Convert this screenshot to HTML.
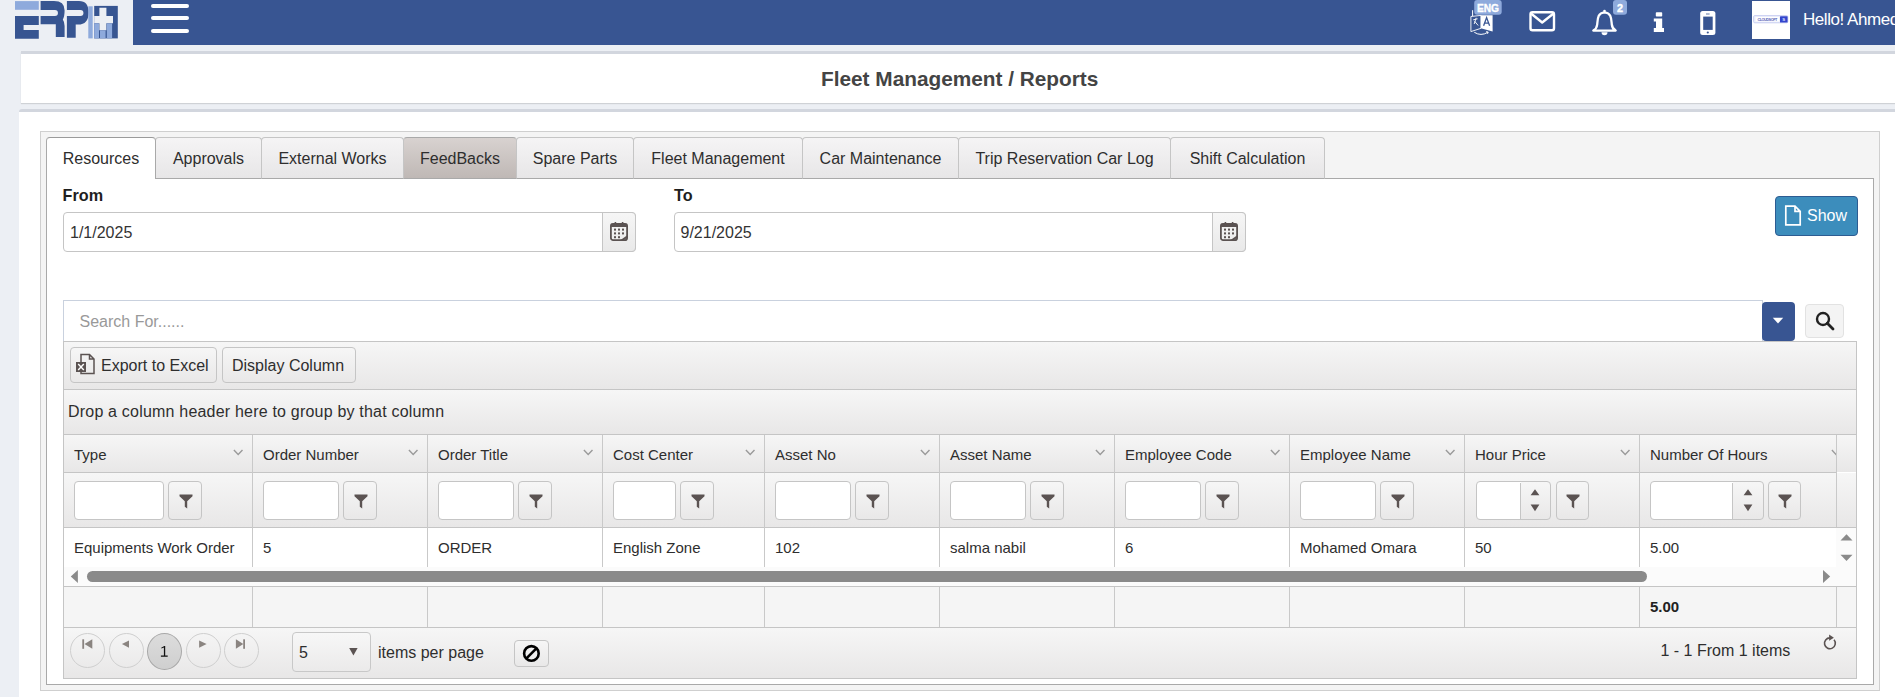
<!DOCTYPE html>
<html><head><meta charset="utf-8">
<style>
*{box-sizing:border-box;margin:0;padding:0}
html,body{width:1895px;height:697px;overflow:hidden}
body{background:#eceff4;font-family:"Liberation Sans",sans-serif;color:#2e2e2e;position:relative;font-size:16px}
.a{position:absolute}
svg{display:block}
.t{position:absolute;white-space:nowrap;line-height:20px}
#hdr{left:133px;top:0;width:1762px;height:45px;background:#385592}
.card1{left:21px;top:51px;width:1874px;height:52px;background:#fff;border-top:3px solid #d2d6de;box-shadow:0 1px 1px rgba(0,0,0,.12)}
.card2{left:19px;top:109px;width:1876px;height:600px;background:#fff;border-top:3px solid #d2d6de;border-radius:3px 0 0 0}
.outer{left:40px;top:131px;width:1840px;height:560px;background:#f4f4f4;border:1px solid #cfcfcf}
.inner{left:46px;top:178px;width:1828px;height:507px;background:#fff;border:1px solid #a9a9a9}
.tab{position:absolute;top:137px;height:42px;border:1px solid #c5c5c5;border-bottom:1px solid #a9a9a9;border-radius:4px 4px 0 0;background:linear-gradient(#f5f4f5,#e7e6e7);color:#2e2e2e}
.tab span{position:absolute;left:0;right:0;top:11px;text-align:center;line-height:20px;white-space:nowrap}
.tab.act{background:#fff;border-color:#a9a9a9;border-top-color:#9a9a9a;border-bottom:none;height:42px;z-index:2}
.tab.hov{background:linear-gradient(#d8d2d0,#bfb8b5);border-top-color:#a9a9a9}
.lbl{position:absolute;font-weight:bold;font-size:16.2px;color:#1e1e1e;line-height:20px}
.inp{position:absolute;height:40px;border:1px solid #c5c5c5;border-radius:4px;background:#fff}
.calb{position:absolute;height:40px;width:34px;border:1px solid #c5c5c5;border-radius:0 4px 4px 0;background:linear-gradient(#f6f6f6,#e9e9e9)}
.grad{background:linear-gradient(#f6f6f6,#e8e7e7)}
.btn{position:absolute;border:1px solid #c5c5c5;border-radius:4px;background:linear-gradient(#f6f6f6,#e9e8e8)}
.vl{position:absolute;width:1px;background:#c9c9c9}
.hl{position:absolute;height:1px;background:#c5c5c5}
</style></head><body>
<!-- header -->
<div class="a" id="hdr"></div>
<!-- logo -->
<svg class="a" style="left:0;top:0" width="133" height="45" viewBox="0 0 133 45">
 <rect x="15" y="1.1" width="23.8" height="8.7" fill="#8eaadc"/>
 <path d="M15 15.9H38.8V25H23.6V30H38.8V38.8H15Z" fill="#375591"/>
 <path d="M40.6 1.1H54Q64.6 1.1 64.6 10.5Q64.6 16.5 62.8 19.5Q64.6 22 64.6 26V37H55.8V24.2H40.6V15.9H55A2.8 2.8 0 0 0 55 10H40.6Z" fill="#375591"/>
 <path d="M66.9 1.1H79Q88.6 1.1 88.6 12.5Q88.6 24.6 78 24.6H75.7V37.7H66.9V15.9H80.5A2.9 2.9 0 0 0 80.5 10H66.9Z" fill="#375591"/>
 <rect x="88.3" y="6.3" width="4.4" height="32.1" fill="#8eaadc"/>
 <rect x="94.2" y="5.9" width="23.6" height="32.5" fill="#375591"/>
 <path d="M99.4 7.8H106.4V15.9H113V23.3H106.4V30.3H99.4V23.3H94.2V15.9H99.4Z" fill="#eceff4"/>
 <rect x="94.2" y="23.3" width="4.8" height="15.1" fill="#8eaadc"/>
 <rect x="100" y="30.3" width="5.6" height="8.1" fill="#8eaadc"/>
 <rect x="106.8" y="23.3" width="5.3" height="15.1" fill="#8eaadc"/>
</svg>
<svg class="a" style="left:151px;top:4px" width="38" height="30" viewBox="0 0 38 30">
 <rect x="0" y="0" width="38" height="4" rx="2" fill="#fff"/>
 <rect x="0" y="12" width="38" height="4" rx="2" fill="#fff"/>
 <rect x="0" y="25" width="38" height="4" rx="2" fill="#fff"/>
</svg>



<!-- header icons -->
<svg class="a" style="left:1460px;top:0" width="435" height="45" viewBox="1460 0 435 45">
 <!-- language -->
 <path d="M1472.6 10.2V16" stroke="#fff" stroke-width="1" fill="none"/>
 <path d="M1470.9 16.5L1481 15.4V28.3L1470.9 31.6Z" fill="none" stroke="#fff" stroke-width="0.9"/>
 <path d="M1480.8 15.2H1492.6V31.6L1480.8 28.2Z" fill="#fff"/>
 <path d="M1483.6 25.8L1486.6 17.6L1489.6 25.8M1484.6 23.2H1488.6" stroke="#385592" stroke-width="1.3" fill="none"/>
 <path d="M1473.2 19.8L1477.6 18.8M1476.2 17.8L1474.2 24M1474.6 21.2L1478.2 25.5" stroke="#fff" stroke-width="0.9" fill="none"/>
 <path d="M1474.3 32.3Q1481 36.5 1487.8 32.3M1486.2 31.6L1488.2 32.1L1487.5 33.8" stroke="#fff" stroke-width="1" fill="none"/>
 <rect x="1474.2" y="0" width="27.5" height="14.7" rx="3" fill="#8eaadc"/>
 <text x="1488" y="11.8" font-family="Liberation Sans" font-weight="bold" font-size="10.2" fill="#fff" stroke="#fff" stroke-width="0.35" text-anchor="middle">ENG</text>
 <!-- envelope -->
 <rect x="1530.5" y="12.2" width="23.5" height="18" rx="2" fill="none" stroke="#fff" stroke-width="2.4"/>
 <path d="M1531 13.5L1542.2 22.5L1553.5 13.5" fill="none" stroke="#fff" stroke-width="2.4" stroke-linejoin="round"/>
 <!-- bell -->
 <path d="M1604.5 12.3C1597.5 12.8 1597.8 19 1597.2 24.5C1596.8 28 1594.5 30 1593.3 30.6H1615.7C1614.5 30 1612.2 28 1611.8 24.5C1611.2 19 1611.5 12.8 1604.5 12.3Z" fill="none" stroke="#fff" stroke-width="2.3" stroke-linejoin="round"/>
 <circle cx="1604.5" cy="11" r="1.3" fill="#fff"/>
 <path d="M1601.5 32.2A3 3 0 0 0 1607.5 32.2Z" fill="#fff"/>
 <rect x="1613" y="0" width="14" height="14.8" rx="3" fill="#8eaadc"/>
 <text x="1620" y="12" font-family="Liberation Sans" font-weight="bold" font-size="10.8" fill="#fff" stroke="#fff" stroke-width="0.4" text-anchor="middle">2</text>
 <!-- info -->
 <rect x="1655.8" y="12.2" width="6.4" height="4.4" rx="0.8" fill="#fff"/>
 <path d="M1653.8 18.5H1662.2V28H1664V32H1653.8V28H1656V21.5H1653.8Z" fill="#fff"/>
 <!-- phone -->
 <rect x="1700.2" y="11.1" width="15.2" height="24" rx="2.5" fill="#fff"/>
 <rect x="1703.2" y="16.6" width="9.5" height="13.3" fill="#385592"/>
 <circle cx="1707.8" cy="32.5" r="1.1" fill="#385592"/>
 <rect x="1706" y="13.6" width="3.6" height="0.8" fill="#385592"/>
 <!-- avatar -->
 <rect x="1752" y="1" width="38" height="38" fill="#fff"/>
 <rect x="1753.6" y="15.6" width="34.2" height="7.2" rx="1.2" fill="#eef0fb" stroke="#c4c9f0" stroke-width="0.9"/>
 <rect x="1755.6" y="17" width="23.6" height="4.4" fill="#fff"/>
 <rect x="1780" y="16.2" width="7.6" height="6.4" rx="0.6" fill="#3344cc"/>
 <text x="1767.4" y="20.6" font-family="Liberation Sans" font-weight="bold" font-size="3.8" fill="#5a63b8" text-anchor="middle" textLength="20">CLOUDSOFT</text>
 <text x="1783.8" y="21" font-family="Liberation Sans" font-weight="bold" font-size="4.4" fill="#dfe3ff" text-anchor="middle">S</text>
</svg>
<div class="t" style="left:1803px;top:10px;font-size:17px;letter-spacing:-0.45px;color:#fff;line-height:20px">Hello! Ahmed</div>
<div class="a card1"></div>
<div class="t" style="left:821px;top:67.0px;font-weight:bold;font-size:20.8px;color:#444;line-height:24px">Fleet Management / Reports</div>

<div class="a card2"></div>
<div class="a outer"></div>
<div class="a inner"></div>

<!-- tabs -->
<div class="tab act" style="left:46px;width:110px"><span>Resources</span></div>
<div class="tab" style="left:155px;width:107px"><span>Approvals</span></div>
<div class="tab" style="left:261px;width:143px"><span>External Works</span></div>
<div class="tab hov" style="left:403px;width:114px"><span>FeedBacks</span></div>
<div class="tab" style="left:516px;width:118px"><span>Spare Parts</span></div>
<div class="tab" style="left:633px;width:170px"><span>Fleet Management</span></div>
<div class="tab" style="left:802px;width:157px"><span>Car Maintenance</span></div>
<div class="tab" style="left:958px;width:213px"><span>Trip Reservation Car Log</span></div>
<div class="tab" style="left:1170px;width:155px"><span>Shift Calculation</span></div>


<!-- form -->
<div class="lbl" style="left:62.6px;top:185px">From</div>
<div class="inp" style="left:63px;top:212px;width:573px"></div>
<div class="calb" style="left:602px;top:212px"><div class="a" style="left:7px;top:9px"><svg width="18" height="19" viewBox="0 0 18 19"><rect x="0.9" y="1.8" width="16.2" height="16.3" rx="2.2" fill="none" stroke="#5b5352" stroke-width="1.8"/><rect x="0.9" y="1.8" width="16.2" height="3.2" fill="#5b5352"/><rect x="4.6" y="0" width="1.6" height="3" fill="#5b5352"/><rect x="11.8" y="0" width="1.6" height="3" fill="#5b5352"/><g fill="#5b5352"><rect x="4" y="6.6" width="2" height="2"/><rect x="8" y="6.6" width="2" height="2"/><rect x="12" y="6.6" width="2" height="2"/><rect x="4" y="10.4" width="2" height="2"/><rect x="8" y="10.4" width="2" height="2"/><rect x="12" y="10.4" width="2" height="2"/><rect x="4" y="14.2" width="2" height="2"/><rect x="8" y="14.2" width="2" height="2"/><path d="M10.5 18L17 13.5V16L14 18Z"/></g></svg></div></div>
<div class="t" style="left:70px;top:223.3px;color:#333">1/1/2025</div>
<div class="lbl" style="left:674px;top:185px">To</div>
<div class="inp" style="left:674px;top:212px;width:572px"></div>
<div class="calb" style="left:1212px;top:212px"><div class="a" style="left:7px;top:9px"><svg width="18" height="19" viewBox="0 0 18 19"><rect x="0.9" y="1.8" width="16.2" height="16.3" rx="2.2" fill="none" stroke="#5b5352" stroke-width="1.8"/><rect x="0.9" y="1.8" width="16.2" height="3.2" fill="#5b5352"/><rect x="4.6" y="0" width="1.6" height="3" fill="#5b5352"/><rect x="11.8" y="0" width="1.6" height="3" fill="#5b5352"/><g fill="#5b5352"><rect x="4" y="6.6" width="2" height="2"/><rect x="8" y="6.6" width="2" height="2"/><rect x="12" y="6.6" width="2" height="2"/><rect x="4" y="10.4" width="2" height="2"/><rect x="8" y="10.4" width="2" height="2"/><rect x="12" y="10.4" width="2" height="2"/><rect x="4" y="14.2" width="2" height="2"/><rect x="8" y="14.2" width="2" height="2"/><path d="M10.5 18L17 13.5V16L14 18Z"/></g></svg></div></div>
<div class="t" style="left:680.5px;top:223.3px;color:#333">9/21/2025</div>
<div class="a" style="left:1775px;top:195.5px;width:82.5px;height:40.5px;background:#3c8dbc;border:1px solid #2d5c92;border-radius:4px"></div>
<svg class="a" style="left:1784px;top:205px" width="18" height="21" viewBox="0 0 18 21"><path d="M1.8 1.2H11L16.2 6.4V19.8H1.8Z M11 1.2V6.4H16.2" fill="none" stroke="#fff" stroke-width="1.7" stroke-linejoin="miter"/></svg>
<div class="t" style="left:1807px;top:206px;color:#fff">Show</div>

<!-- search -->
<div class="a" style="left:63px;top:300px;width:1700px;height:42px;border:1px solid #c9d1de;background:#fff"></div>
<div class="t" style="left:79.5px;top:312.0px;color:#999">Search For......</div>
<div class="a" style="left:1762px;top:301.5px;width:32.5px;height:39px;background:#385592;border-radius:4px"></div>
<svg class="a" style="left:1772px;top:317px" width="12" height="7" viewBox="0 0 12 7"><path d="M0.8 0.8H11.2L6 6.4Z" fill="#fff"/></svg>
<div class="a" style="left:1805px;top:304px;width:38.5px;height:33.5px;background:#f4f4f4;border:1px solid #e2e2e2;border-radius:4px"></div>
<svg class="a" style="left:1815px;top:311px" width="20" height="20" viewBox="0 0 20 20"><circle cx="8" cy="8" r="6" fill="none" stroke="#222" stroke-width="2.4"/><path d="M12.3 12.3L18 18" stroke="#222" stroke-width="2.8" stroke-linecap="round"/></svg>

<!-- grid -->
<div class="a" style="left:63px;top:341px;width:1794px;height:338px;border:1px solid #c5c5c5;background:#fff"></div>
<div class="a grad" style="left:64px;top:342px;width:1792px;height:47px"></div>
<div class="hl" style="left:64px;top:389px;width:1792px"></div>
<div class="btn" style="left:70px;top:347px;width:146.5px;height:36px"></div>
<svg class="a" style="left:75px;top:353px" width="21" height="22" viewBox="0 0 21 22"><path d="M6 1.5H14.5L19 6V20.5H6Z M14.5 1.5V6H19" fill="none" stroke="#5b5352" stroke-width="1.5"/><rect x="1" y="9" width="10" height="10" fill="#5b5352"/><path d="M3.2 11L8.8 17M8.8 11L3.2 17" stroke="#fff" stroke-width="1.4"/></svg>
<div class="t" style="left:101px;top:355.8px">Export to Excel</div>
<div class="btn" style="left:222px;top:347px;width:133.5px;height:36px"></div>
<div class="t" style="left:232px;top:355.8px">Display Column</div>
<div class="a grad" style="left:64px;top:390px;width:1792px;height:44px"></div>
<div class="hl" style="left:64px;top:434px;width:1792px"></div>
<div class="t" style="left:68px;top:402px;letter-spacing:0.2px">Drop a column header here to group by that column</div>
<div class="a grad" style="left:64px;top:435px;width:1792px;height:37px"></div>
<div class="hl" style="left:64px;top:472px;width:1772px"></div>
<div class="a grad" style="left:64px;top:473px;width:1792px;height:54px"></div>
<div class="hl" style="left:64px;top:527px;width:1792px"></div>
<div class="a" style="left:64px;top:528px;width:1772px;height:39px;background:#fff"></div>
<div class="a" style="left:64px;top:567px;width:1772px;height:19px;background:#fbfbfb"></div>
<div class="a" style="left:1836px;top:528px;width:20px;height:58px;background:#fbfbfb"></div>
<div class="a" style="left:87px;top:570.5px;width:1560px;height:11.5px;border-radius:6px;background:#8a8a8a"></div>
<svg class="a" style="left:68px;top:567px" width="1770" height="19" viewBox="68 567 1770 19"><path d="M70.8 576.4L77.9 569.9V583Z" fill="#8a8a8a"/><path d="M1830.2 576.5L1823 570V583Z" fill="#8a8a8a"/></svg>
<svg class="a" style="left:1838px;top:530px" width="18" height="34" viewBox="1838 530 18 34"><path d="M1840.5 540.5H1852.5L1846.5 534.3Z" fill="#8a8a8a"/><path d="M1840.5 554.8H1852.5L1846.5 561Z" fill="#8a8a8a"/></svg>
<div class="hl" style="left:64px;top:586px;width:1792px"></div>
<div class="a" style="left:64px;top:587px;width:1792px;height:40px;background:#f5f5f5"></div>
<div class="hl" style="left:64px;top:626.5px;width:1792px;background:#c5c5c5"></div>
<div class="t" style="left:1650px;top:597px;font-weight:bold;font-size:15px;color:#222">5.00</div>
<div class="a grad" style="left:64px;top:627.5px;width:1792px;height:50.5px"></div>
<div class="t" style="left:74px;top:444.6px;font-size:15px">Type</div>
<div class="a" style="left:232.5px;top:449px"><svg width="10" height="7" viewBox="0 0 10 7"><path d="M0.9 1.1L5.2 5.6L9.5 1.1" fill="none" stroke="#9a9a9a" stroke-width="1.4"/></svg></div>
<div class="t" style="left:74px;top:537.8px;font-size:15px">Equipments Work Order</div>
<div class="inp" style="left:74px;top:481.2px;width:90px;height:38.5px"></div>
<div class="btn" style="left:168px;top:481.2px;width:33.5px;height:38.5px"><div class="a" style="left:9.5px;top:11.5px"><svg width="14" height="15" viewBox="0 0 14 15"><path d="M0.5 0.5H13.5V2.2L8.2 7.2V14.5L5.8 12.8V7.2L0.5 2.2Z" fill="#5b5352"/></svg></div></div>
<div class="vl" style="left:252px;top:435px;height:132px"></div>
<div class="vl" style="left:252px;top:587px;height:40px"></div>
<div class="t" style="left:263px;top:444.6px;font-size:15px">Order Number</div>
<div class="a" style="left:407.5px;top:449px"><svg width="10" height="7" viewBox="0 0 10 7"><path d="M0.9 1.1L5.2 5.6L9.5 1.1" fill="none" stroke="#9a9a9a" stroke-width="1.4"/></svg></div>
<div class="t" style="left:263px;top:537.8px;font-size:15px">5</div>
<div class="inp" style="left:263px;top:481.2px;width:76px;height:38.5px"></div>
<div class="btn" style="left:343px;top:481.2px;width:33.5px;height:38.5px"><div class="a" style="left:9.5px;top:11.5px"><svg width="14" height="15" viewBox="0 0 14 15"><path d="M0.5 0.5H13.5V2.2L8.2 7.2V14.5L5.8 12.8V7.2L0.5 2.2Z" fill="#5b5352"/></svg></div></div>
<div class="vl" style="left:427px;top:435px;height:132px"></div>
<div class="vl" style="left:427px;top:587px;height:40px"></div>
<div class="t" style="left:438px;top:444.6px;font-size:15px">Order Title</div>
<div class="a" style="left:582.5px;top:449px"><svg width="10" height="7" viewBox="0 0 10 7"><path d="M0.9 1.1L5.2 5.6L9.5 1.1" fill="none" stroke="#9a9a9a" stroke-width="1.4"/></svg></div>
<div class="t" style="left:438px;top:537.8px;font-size:15px">ORDER</div>
<div class="inp" style="left:438px;top:481.2px;width:76px;height:38.5px"></div>
<div class="btn" style="left:518px;top:481.2px;width:33.5px;height:38.5px"><div class="a" style="left:9.5px;top:11.5px"><svg width="14" height="15" viewBox="0 0 14 15"><path d="M0.5 0.5H13.5V2.2L8.2 7.2V14.5L5.8 12.8V7.2L0.5 2.2Z" fill="#5b5352"/></svg></div></div>
<div class="vl" style="left:602px;top:435px;height:132px"></div>
<div class="vl" style="left:602px;top:587px;height:40px"></div>
<div class="t" style="left:613px;top:444.6px;font-size:15px">Cost Center</div>
<div class="a" style="left:744.5px;top:449px"><svg width="10" height="7" viewBox="0 0 10 7"><path d="M0.9 1.1L5.2 5.6L9.5 1.1" fill="none" stroke="#9a9a9a" stroke-width="1.4"/></svg></div>
<div class="t" style="left:613px;top:537.8px;font-size:15px">English Zone</div>
<div class="inp" style="left:613px;top:481.2px;width:63px;height:38.5px"></div>
<div class="btn" style="left:680px;top:481.2px;width:33.5px;height:38.5px"><div class="a" style="left:9.5px;top:11.5px"><svg width="14" height="15" viewBox="0 0 14 15"><path d="M0.5 0.5H13.5V2.2L8.2 7.2V14.5L5.8 12.8V7.2L0.5 2.2Z" fill="#5b5352"/></svg></div></div>
<div class="vl" style="left:764px;top:435px;height:132px"></div>
<div class="vl" style="left:764px;top:587px;height:40px"></div>
<div class="t" style="left:775px;top:444.6px;font-size:15px">Asset No</div>
<div class="a" style="left:919.5px;top:449px"><svg width="10" height="7" viewBox="0 0 10 7"><path d="M0.9 1.1L5.2 5.6L9.5 1.1" fill="none" stroke="#9a9a9a" stroke-width="1.4"/></svg></div>
<div class="t" style="left:775px;top:537.8px;font-size:15px">102</div>
<div class="inp" style="left:775px;top:481.2px;width:76px;height:38.5px"></div>
<div class="btn" style="left:855px;top:481.2px;width:33.5px;height:38.5px"><div class="a" style="left:9.5px;top:11.5px"><svg width="14" height="15" viewBox="0 0 14 15"><path d="M0.5 0.5H13.5V2.2L8.2 7.2V14.5L5.8 12.8V7.2L0.5 2.2Z" fill="#5b5352"/></svg></div></div>
<div class="vl" style="left:939px;top:435px;height:132px"></div>
<div class="vl" style="left:939px;top:587px;height:40px"></div>
<div class="t" style="left:950px;top:444.6px;font-size:15px">Asset Name</div>
<div class="a" style="left:1094.5px;top:449px"><svg width="10" height="7" viewBox="0 0 10 7"><path d="M0.9 1.1L5.2 5.6L9.5 1.1" fill="none" stroke="#9a9a9a" stroke-width="1.4"/></svg></div>
<div class="t" style="left:950px;top:537.8px;font-size:15px">salma nabil</div>
<div class="inp" style="left:950px;top:481.2px;width:76px;height:38.5px"></div>
<div class="btn" style="left:1030px;top:481.2px;width:33.5px;height:38.5px"><div class="a" style="left:9.5px;top:11.5px"><svg width="14" height="15" viewBox="0 0 14 15"><path d="M0.5 0.5H13.5V2.2L8.2 7.2V14.5L5.8 12.8V7.2L0.5 2.2Z" fill="#5b5352"/></svg></div></div>
<div class="vl" style="left:1114px;top:435px;height:132px"></div>
<div class="vl" style="left:1114px;top:587px;height:40px"></div>
<div class="t" style="left:1125px;top:444.6px;font-size:15px">Employee Code</div>
<div class="a" style="left:1269.5px;top:449px"><svg width="10" height="7" viewBox="0 0 10 7"><path d="M0.9 1.1L5.2 5.6L9.5 1.1" fill="none" stroke="#9a9a9a" stroke-width="1.4"/></svg></div>
<div class="t" style="left:1125px;top:537.8px;font-size:15px">6</div>
<div class="inp" style="left:1125px;top:481.2px;width:76px;height:38.5px"></div>
<div class="btn" style="left:1205px;top:481.2px;width:33.5px;height:38.5px"><div class="a" style="left:9.5px;top:11.5px"><svg width="14" height="15" viewBox="0 0 14 15"><path d="M0.5 0.5H13.5V2.2L8.2 7.2V14.5L5.8 12.8V7.2L0.5 2.2Z" fill="#5b5352"/></svg></div></div>
<div class="vl" style="left:1289px;top:435px;height:132px"></div>
<div class="vl" style="left:1289px;top:587px;height:40px"></div>
<div class="t" style="left:1300px;top:444.6px;font-size:15px">Employee Name</div>
<div class="a" style="left:1444.5px;top:449px"><svg width="10" height="7" viewBox="0 0 10 7"><path d="M0.9 1.1L5.2 5.6L9.5 1.1" fill="none" stroke="#9a9a9a" stroke-width="1.4"/></svg></div>
<div class="t" style="left:1300px;top:537.8px;font-size:15px">Mohamed Omara</div>
<div class="inp" style="left:1300px;top:481.2px;width:76px;height:38.5px"></div>
<div class="btn" style="left:1380px;top:481.2px;width:33.5px;height:38.5px"><div class="a" style="left:9.5px;top:11.5px"><svg width="14" height="15" viewBox="0 0 14 15"><path d="M0.5 0.5H13.5V2.2L8.2 7.2V14.5L5.8 12.8V7.2L0.5 2.2Z" fill="#5b5352"/></svg></div></div>
<div class="vl" style="left:1464px;top:435px;height:132px"></div>
<div class="vl" style="left:1464px;top:587px;height:40px"></div>
<div class="t" style="left:1475px;top:444.6px;font-size:15px">Hour Price</div>
<div class="a" style="left:1619.5px;top:449px"><svg width="10" height="7" viewBox="0 0 10 7"><path d="M0.9 1.1L5.2 5.6L9.5 1.1" fill="none" stroke="#9a9a9a" stroke-width="1.4"/></svg></div>
<div class="t" style="left:1475px;top:537.8px;font-size:15px">50</div>
<div class="vl" style="left:1639px;top:435px;height:132px"></div>
<div class="vl" style="left:1639px;top:587px;height:40px"></div>
<div class="t" style="left:1650px;top:444.6px;font-size:15px">Number Of Hours</div>
<div class="a" style="left:1826px;top:449px;width:10px;overflow:hidden"><div style="margin-left:5px"><svg width="10" height="7" viewBox="0 0 10 7"><path d="M0.9 1.1L5.2 5.6L9.5 1.1" fill="none" stroke="#9a9a9a" stroke-width="1.4"/></svg></div></div>
<div class="t" style="left:1650px;top:537.8px;font-size:15px">5.00</div>
<div class="inp" style="left:1475.5px;top:481.2px;width:75px;height:38.5px;background:linear-gradient(90deg,#fff 44px,transparent 44px),linear-gradient(#f6f6f6,#e9e8e8)"></div>
<div class="vl" style="left:1519.5px;top:482.5px;height:36.5px;background:#c5c5c5"></div>
<div class="a" style="left:1529.0px;top:487.5px"><svg width="12" height="24" viewBox="0 0 12 24"><path d="M1.6 7.2H10.4L6 1.2Z M1.6 16.6H10.4L6 23.2Z" fill="#5b5352"/></svg></div>
<div class="btn" style="left:1555.5px;top:481.2px;width:33.5px;height:38.5px"><div class="a" style="left:9.5px;top:11.5px"><svg width="14" height="15" viewBox="0 0 14 15"><path d="M0.5 0.5H13.5V2.2L8.2 7.2V14.5L5.8 12.8V7.2L0.5 2.2Z" fill="#5b5352"/></svg></div></div>
<div class="inp" style="left:1650px;top:481.2px;width:114px;height:38.5px;background:linear-gradient(90deg,#fff 82px,transparent 82px),linear-gradient(#f6f6f6,#e9e8e8)"></div>
<div class="vl" style="left:1732px;top:482.5px;height:36.5px;background:#c5c5c5"></div>
<div class="a" style="left:1741.5px;top:487.5px"><svg width="12" height="24" viewBox="0 0 12 24"><path d="M1.6 7.2H10.4L6 1.2Z M1.6 16.6H10.4L6 23.2Z" fill="#5b5352"/></svg></div>
<div class="btn" style="left:1767.5px;top:481.2px;width:33.5px;height:38.5px"><div class="a" style="left:9.5px;top:11.5px"><svg width="14" height="15" viewBox="0 0 14 15"><path d="M0.5 0.5H13.5V2.2L8.2 7.2V14.5L5.8 12.8V7.2L0.5 2.2Z" fill="#5b5352"/></svg></div></div>
<div class="vl" style="left:1836px;top:435px;height:92px"></div>
<div class="vl" style="left:1836px;top:587px;height:40px"></div>
<div class="a" style="left:70px;top:633px;width:35px;height:35px;border-radius:50%;border:1px solid #cfcfcf"></div>
<div class="a" style="left:108.5px;top:633px;width:35px;height:35px;border-radius:50%;border:1px solid #cfcfcf"></div>
<div class="a" style="left:147px;top:632.8px;width:35px;height:37px;border-radius:50%;border:1px solid #a8a8a8;background:linear-gradient(#dcdcdc,#cfcfcf)"></div>
<div class="a" style="left:186px;top:633px;width:35px;height:35px;border-radius:50%;border:1px solid #cfcfcf"></div>
<div class="a" style="left:224px;top:633px;width:35px;height:35px;border-radius:50%;border:1px solid #cfcfcf"></div>
<svg class="a" style="left:158px;top:644px" width="12" height="14" viewBox="158 644 12 14"><path d="M161.2 647.7L164.3 645.9H165.2V655.6H167.7V656.7H160.9V655.6H163.9V647.5L161.5 648.6Z" fill="#111"/></svg>
<svg class="a" style="left:70px;top:636px" width="190" height="16" viewBox="70 636 190 16"><g fill="#8a8480"><rect x="82.3" y="639.3" width="1.8" height="9.5"/><path d="M92.3 639.3V648.8L84.5 644Z"/><path d="M129 640.4V647.8L121.9 644.1Z"/><path d="M199.1 640.4V647.8L206.6 644.1Z"/><path d="M235.9 639.3V648.8L243.3 644Z"/><rect x="243.2" y="639.3" width="1.8" height="9.5"/></g></svg>
<div class="a" style="left:291.8px;top:632px;width:78.8px;height:39.5px;border:1px solid #c8c8c8;border-radius:4px;background:linear-gradient(#f7f7f7,#ebeaea)"></div>
<div class="t" style="left:299px;top:643.3px">5</div>
<svg class="a" style="left:349px;top:647px" width="10" height="9" viewBox="0 0 10 9"><path d="M0.2 0.9H8.6L4.4 8.5Z" fill="#5b5352"/></svg>
<div class="t" style="left:378px;top:643px">items per page</div>
<div class="btn" style="left:513.5px;top:640px;width:35px;height:26.5px"></div>
<svg class="a" style="left:521px;top:643px" width="21" height="21" viewBox="0 0 21 21"><circle cx="10.4" cy="10.4" r="7.3" fill="none" stroke="#000" stroke-width="2.6"/><path d="M15.4 5.4L5.4 15.4" stroke="#000" stroke-width="2.6"/></svg>
<div class="t" style="left:1660.5px;top:641.0px">1 - 1 From 1 items</div>
<svg class="a" style="left:1820px;top:632px" width="20" height="20" viewBox="1820 632 20 20"><path d="M1829.9 637.9A5.4 5.4 0 1 0 1834.04 639.83" fill="none" stroke="#5b5352" stroke-width="1.6"/><path d="M1829.1 634.6V640.8L1833.9 637.7Z" fill="#5b5352"/></svg>
</body></html>
